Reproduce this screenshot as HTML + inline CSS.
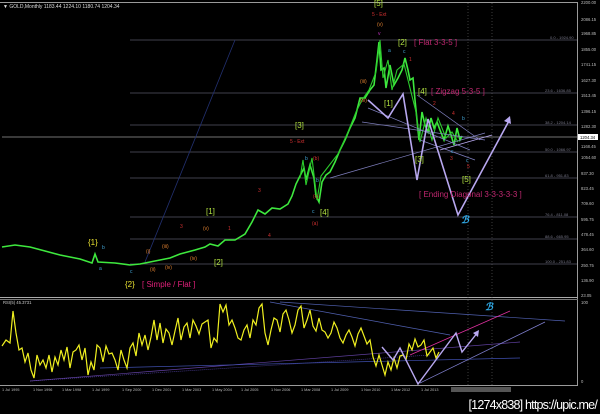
<!DOCTYPE html>
<html><head><meta charset="utf-8"><style>
html,body{margin:0;padding:0;background:#000;width:600px;height:414px;overflow:hidden}
svg{display:block}
text{font-family:"Liberation Sans",sans-serif}
</style></head><body>
<svg width="600" height="414" viewBox="0 0 600 414" xmlns="http://www.w3.org/2000/svg">
<rect width="600" height="414" fill="#000"/>
<line x1="0" y1="2.5" x2="578" y2="2.5" stroke="#9a9a9a" stroke-width="1"/>
<line x1="577.5" y1="2" x2="577.5" y2="386" stroke="#9a9a9a" stroke-width="1"/>
<line x1="0" y1="297.5" x2="578" y2="297.5" stroke="#aaa" stroke-width="1"/>
<line x1="0" y1="299.5" x2="578" y2="299.5" stroke="#777" stroke-width="1"/>
<line x1="0" y1="385.5" x2="578" y2="385.5" stroke="#9a9a9a" stroke-width="1"/>
<text x="3" y="8" font-size="5" fill="#ddd">▼ GOLD,Monthly  1183.44 1224.10 1180.74 1204.34</text>
<g stroke="#556" stroke-width="0.8">
<line x1="130" y1="40" x2="577" y2="40"/>
<line x1="130" y1="93" x2="577" y2="93"/>
<line x1="130" y1="125" x2="577" y2="125"/>
<line x1="130" y1="152" x2="577" y2="152"/>
<line x1="130" y1="178" x2="577" y2="178"/>
<line x1="130" y1="217" x2="577" y2="217"/>
<line x1="130" y1="239" x2="577" y2="239"/>
<line x1="130" y1="264" x2="577" y2="264"/>
</g>
<line x1="2" y1="137" x2="577" y2="137" stroke="#999" stroke-width="0.8"/>
<g font-size="4" fill="#778">
<text x="550" y="39">0.0 - 1924.90</text><text x="545" y="92">23.6 - 1636.85</text><text x="545" y="124">38.2 - 1204.14</text><text x="545" y="151">50.0 - 1066.97</text><text x="545" y="177">61.8 - 951.83</text><text x="545" y="216">76.4 - 811.08</text><text x="545" y="238">88.6 - 665.95</text><text x="545" y="263">100.0 - 251.83</text>
</g>
<line x1="468" y1="3" x2="468" y2="385" stroke="#666" stroke-width="0.6" stroke-dasharray="1,2"/>
<line x1="492" y1="3" x2="492" y2="385" stroke="#666" stroke-width="0.6" stroke-dasharray="1,2"/>
<g font-size="4.2" fill="#bbb">
<text x="581" y="4">2200.00</text><text x="581" y="21">2086.15</text><text x="581" y="35">1968.85</text><text x="581" y="51">1855.00</text><text x="581" y="66">1741.15</text><text x="581" y="82">1627.30</text><text x="581" y="97">1513.45</text><text x="581" y="113">1396.15</text><text x="581" y="128">1282.30</text><text x="581" y="148">1168.45</text><text x="581" y="159">1054.60</text><text x="581" y="175">937.30</text><text x="581" y="190">823.45</text><text x="581" y="205">709.60</text><text x="581" y="221">595.75</text><text x="581" y="236">478.45</text><text x="581" y="251">364.60</text><text x="581" y="267">250.75</text><text x="581" y="282">136.90</text><text x="581" y="297">23.05</text>
</g>
<rect x="578" y="134" width="20" height="6" fill="#fff"/>
<text x="580" y="139" font-size="4.2" fill="#000">1204.34</text>
<line x1="145" y1="262" x2="235" y2="40" stroke="#223070" stroke-width="0.8"/>
<polyline fill="none" stroke="#3ee83e" stroke-width="1.6" points="2,247 15,245 30,247 45,251 60,255 80,259 92,263 95,254 98,262 115,263 130,265 140,264 150,262 160,260 170,258 180,254 195,250 205,247 210,244 218,246 225,240 235,240 245,234 252,222 258,210 265,214 272,208 280,209 288,204 292,196 296,184 300,176 304,168 306,180 310,165 314,178 316,196 319,202 322,182 326,175 330,172 335,162 340,150 345,140 350,128 355,118 360,98 365,98 370,90 374,85 377,60 379,42 381,70 384,68 386,88 390,65 394,85 398,78 402,70 405,58 408,70 410,80 413,78 415,100 417,120 419,140 422,112 425,125 428,132 431,118 434,128 437,122 440,130 444,140 448,126 451,135 454,145 457,128 460,140 462,136"/>
<polyline fill="none" stroke="#2bc92b" stroke-width="1.1" points="300,178 303,160 306,185 312,158 317,200 321,176 338,154 348,132 356,112 362,100 369,90 376,72 380,40 383,78 388,60 392,90 397,70 404,64 410,88 416,112 420,142 426,118 432,140 438,118 446,138 452,132 458,142"/>
<g stroke="#8080c0" stroke-width="0.7" fill="none">
<line x1="330" y1="178" x2="485" y2="133"/>
<line x1="362" y1="122" x2="485" y2="140"/>
<line x1="368" y1="108" x2="470" y2="150"/>
<line x1="417" y1="95" x2="480" y2="140"/>
<line x1="420" y1="140" x2="475" y2="160"/>
</g>
<polyline fill="none" stroke="#b8a8f0" stroke-width="1.6" points="368,100 388,118 403,94 417,180 428,119 458,215 510,119"/>
<polygon points="510,116 504,121 511,124" fill="#b8a8f0"/>
<polyline fill="none" stroke="#b8a8f0" stroke-width="0.9" points="440,150 492,135"/>
<g font-size="8">
<text x="88" y="245" fill="#e8e030">{1}</text>
<text x="125" y="287" fill="#e8e030">{2}</text>
<text x="142" y="287" fill="#e0207a">[ Simple / Flat ]</text>
<text x="206" y="214" fill="#b0e040">[1]</text>
<text x="214" y="265" fill="#b0e040">[2]</text>
<text x="295" y="128" fill="#b0e040">[3]</text>
<text x="320" y="215" fill="#b0e040">[4]</text>
<text x="398" y="45" fill="#b0e040">[2]</text>
<text x="414" y="45" fill="#c02870">[ Flat 3-3-5 ]</text>
<text x="418" y="94" fill="#b0e040">[4]</text>
<text x="431" y="94" fill="#c02870">[ Zigzag 5-3-5 ]</text>
<text x="384" y="106" fill="#b0e040">[1]</text>
<text x="415" y="162" fill="#b0e040">[3]</text>
<text x="462" y="182" fill="#b0e040">[5]</text>
<text x="419" y="197" fill="#c02870">[ Ending Diagonal 3-3-3-3-3 ]</text>
<text x="374" y="6" fill="#b0e040">[5]</text>
</g>
<g font-size="5">
<text x="372" y="16" fill="#d03030">5 - Ext</text>
<text x="290" y="143" fill="#d03030">5 - Ext</text>
<text x="377" y="26" fill="#e08030">(v)</text>
<text x="378" y="35" fill="#c030c0">v</text>
<text x="388" y="52" fill="#40a0d0">a</text>
<text x="403" y="53" fill="#40a0d0">c</text>
<text x="409" y="61" fill="#d03030">1</text>
<text x="360" y="83" fill="#e08030">(iii)</text>
<text x="360" y="102" fill="#e08030">(iv)</text>
<text x="313" y="160" fill="#d03030">(b)</text>
<text x="313" y="198" fill="#d03030">(c)</text>
<text x="312" y="225" fill="#d03030">(a)</text>
<text x="305" y="160" fill="#40a0d0">b</text>
<text x="316" y="182" fill="#40a0d0">b</text>
<text x="312" y="213" fill="#40a0d0">c</text>
<text x="258" y="192" fill="#d03030">3</text>
<text x="268" y="237" fill="#d03030">4</text>
<text x="228" y="230" fill="#d03030">1</text>
<text x="180" y="228" fill="#d03030">3</text>
<text x="203" y="230" fill="#e08030">(v)</text>
<text x="146" y="253" fill="#e08030">(i)</text>
<text x="162" y="248" fill="#e08030">(iii)</text>
<text x="150" y="271" fill="#e08030">(ii)</text>
<text x="165" y="269" fill="#e08030">(iv)</text>
<text x="190" y="260" fill="#e08030">(iv)</text>
<text x="102" y="249" fill="#40a0d0">b</text>
<text x="99" y="270" fill="#40a0d0">a</text>
<text x="130" y="273" fill="#40a0d0">c</text>
<text x="451" y="153" fill="#40a0d0">c</text>
<text x="466" y="162" fill="#40a0d0">c</text>
<text x="462" y="120" fill="#40a0d0">b</text>
<text x="450" y="160" fill="#d03030">3</text>
<text x="467" y="168" fill="#d03030">5</text>
<text x="433" y="105" fill="#d03030">2</text>
<text x="452" y="115" fill="#d03030">4</text>
</g>
<text x="461" y="223" font-size="10" fill="#30b0f0" font-style="italic" font-weight="bold">ℬ</text>
<text x="3" y="304" font-size="4.2" fill="#ccc">RSI(5) 45.3731</text>
<text x="581" y="304" font-size="4.2" fill="#bbb">100</text>
<text x="581" y="383" font-size="4.2" fill="#bbb">0</text>
<g stroke-width="0.7" fill="none">
<line x1="280" y1="302" x2="565" y2="321" stroke="#5060b0"/>
<line x1="30" y1="381" x2="430" y2="355" stroke="#5040a0" stroke-dasharray="1,1"/>
<line x1="30" y1="381" x2="520" y2="342" stroke="#6040a0"/>
<line x1="100" y1="368" x2="520" y2="358" stroke="#4050b0"/>
<line x1="410" y1="355" x2="510" y2="311" stroke="#e030a0"/>
<line x1="420" y1="383" x2="545" y2="322" stroke="#8080d0"/>
<line x1="270" y1="302" x2="450" y2="335" stroke="#5060b0"/>
</g>
<polyline fill="none" stroke="#f0f020" stroke-width="1.2" points="2,346 6,340 10,343 13,311 16,333 19,350 22,348 25,362 28,353 31,370 34,378 37,355 40,365 43,360 46,368 49,355 52,372 55,357 58,365 61,350 64,360 67,347 70,368 73,352 76,350 79,345 82,360 85,348 88,375 91,362 94,370 97,345 100,348 103,362 106,346 109,354 112,353 115,360 118,370 121,350 124,360 127,368 130,348 133,343 136,356 139,333 142,345 145,335 148,350 151,337 154,320 157,340 160,323 163,343 166,329 169,333 172,345 175,331 178,318 181,340 184,327 187,323 190,338 193,320 196,326 199,334 202,324 205,322 208,320 211,348 214,338 217,342 220,304 223,312 226,305 229,325 232,320 235,328 238,338 241,340 244,330 247,325 250,338 253,320 256,325 259,308 262,304 265,333 268,345 271,330 274,318 277,320 280,332 283,314 286,310 289,320 292,333 295,325 298,310 301,306 304,328 307,320 310,310 313,326 316,331 319,318 322,330 325,332 328,338 331,333 334,322 337,328 340,338 343,343 346,335 349,330 352,337 355,346 358,334 361,328 364,336 367,344 370,340 373,357 376,366 379,355 382,365 385,375 388,362 391,370 394,358 397,368 400,356 403,355 406,360 409,344 412,350 415,339 418,347 421,345 424,340 427,356 430,352 433,348 436,358 439,352"/>
<polyline fill="none" stroke="#b8a8f0" stroke-width="1.4" points="382,347 393,360 400,348 418,384 456,333 462,352 478,332"/>
<polygon points="479,330 473,333 478,337" fill="#b8a8f0"/>
<text x="485" y="310" font-size="10" fill="#30b0f0" font-style="italic" font-weight="bold">ℬ</text>
<g font-size="3.8" fill="#bbb">
<text x="2" y="391">1 Jul 1995</text><text x="33" y="391">1 Nov 1996</text><text x="62" y="391">1 Mar 1998</text><text x="92" y="391">1 Jul 1999</text><text x="122" y="391">1 Sep 2000</text><text x="152" y="391">1 Dec 2001</text><text x="182" y="391">1 Mar 2003</text><text x="212" y="391">1 May 2004</text><text x="241" y="391">1 Jul 2005</text><text x="271" y="391">1 Nov 2006</text><text x="301" y="391">1 Mar 2008</text><text x="331" y="391">1 Jul 2009</text><text x="361" y="391">1 Nov 2010</text><text x="391" y="391">1 Mar 2012</text><text x="421" y="391">1 Jul 2013</text>
</g>
<rect x="451" y="387" width="60" height="5" fill="#555"/>
<text x="597" y="409" font-size="12.5" fill="#fff" text-anchor="end" font-family="Liberation Mono, monospace" letter-spacing="-0.8">[1274x838] https://upic.me/</text>
</svg>
</body></html>
